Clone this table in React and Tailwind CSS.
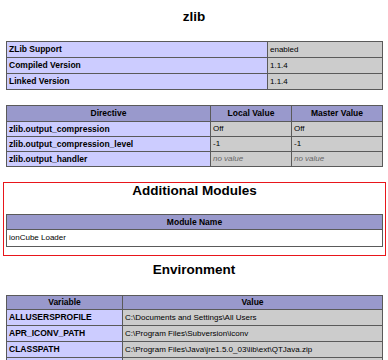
const zlibInfo = [
  ['ZLib Support', 'enabled'],
  ['Compiled Version', '1.1.4'],
  ['Linked Version', '1.1.4'],
];

const directives = [
  ['zlib.output_compression', 'Off', 'Off'],
  ['zlib.output_compression_level', '-1', '-1'],
  ['zlib.output_handler', null, null],
];

const envVars = [
  ['ALLUSERSPROFILE', 'C:\\Documents and Settings\\All Users'],
  ['APR_ICONV_PATH', 'C:\\Program Files\\Subversion\\iconv'],
  ['CLASSPATH', 'C:\\Program Files\\Java\\jre1.5.0_03\\lib\\ext\\QTJava.zip'],
  ['', ''],
];

const cell = 'border border-[#5a5a5a] px-[2px] py-0 align-middle whitespace-nowrap overflow-hidden';
const keyCell = `${cell} bg-[#ccccff] font-bold text-[8.5px] text-black`;
const valCell = `${cell} bg-[#cccccc] text-[8px] text-black`;
const headCell = `${cell} bg-[#9999cc] font-bold text-[8.5px] text-black text-center`;

function NoValue() {
  return <i className="text-[#666666]">no value</i>;
}

function Heading({ children, className = '' }) {
  return (
    <h2 className={`flex items-center justify-center text-[13.5px] font-bold text-black ${className}`}>
      {children}
    </h2>
  );
}

export default function App() {
  return (
    <div className="w-[388px] h-[360px] overflow-hidden bg-white font-['Liberation_Sans',Arial,sans-serif]">
      <Heading className="h-[34px]">zlib</Heading>

      {/* zlib settings */}
      <table className="ml-[6px] mt-[7px] w-[377px] table-fixed border-collapse">
        <colgroup>
          <col className="w-[261px]" />
          <col />
        </colgroup>
        <tbody>
          {zlibInfo.map(([k, v]) => (
            <tr key={k} className="leading-[15px]">
              <td className={keyCell}>{k}</td>
              <td className={valCell}>{v}</td>
            </tr>
          ))}
        </tbody>
      </table>

      {/* directives */}
      <table className="ml-[6px] mt-[15px] w-[377px] table-fixed border-collapse">
        <colgroup>
          <col className="w-[204px]" />
          <col className="w-[81px]" />
          <col />
        </colgroup>
        <thead>
          <tr className="leading-[15px]">
            <th className={headCell}>Directive</th>
            <th className={headCell}>Local Value</th>
            <th className={headCell}>Master Value</th>
          </tr>
        </thead>
        <tbody>
          {directives.map(([name, local, master]) => (
            <tr key={name} className="leading-[14px]">
              <td className={keyCell}>{name}</td>
              <td className={valCell}>{local ?? <NoValue />}</td>
              <td className={valCell}>{master ?? <NoValue />}</td>
            </tr>
          ))}
        </tbody>
      </table>

      {/* Additional Modules */}
      <div className="ml-[3px] mt-[15px] w-[383px] border border-[#e8161b] pt-0 pb-[8px] px-[2px]">
        <Heading className="h-[17px]">Additional Modules</Heading>
        <table className="mt-[14px] w-[377px] table-fixed border-collapse">
          <thead>
            <tr className="leading-[14px]">
              <th className={headCell}>Module Name</th>
            </tr>
          </thead>
          <tbody>
            <tr className="leading-[16px]">
              <td className={`${cell} bg-white text-[8px] text-black`}>ionCube Loader</td>
            </tr>
          </tbody>
        </table>
      </div>

      <Heading className="h-[28px]">Environment</Heading>

      {/* environment */}
      <table className="ml-[6px] mt-[11px] w-[377px] table-fixed border-collapse">
        <colgroup>
          <col className="w-[116px]" />
          <col />
        </colgroup>
        <thead>
          <tr className="leading-[13px]">
            <th className={headCell}>Variable</th>
            <th className={headCell}>Value</th>
          </tr>
        </thead>
        <tbody>
          {envVars.map(([k, v], i) => (
            <tr key={i} className="leading-[15px]">
              <td className={keyCell}>{k || '\u00a0'}</td>
              <td className={valCell}>{v || '\u00a0'}</td>
            </tr>
          ))}
        </tbody>
      </table>
    </div>
  );
}
